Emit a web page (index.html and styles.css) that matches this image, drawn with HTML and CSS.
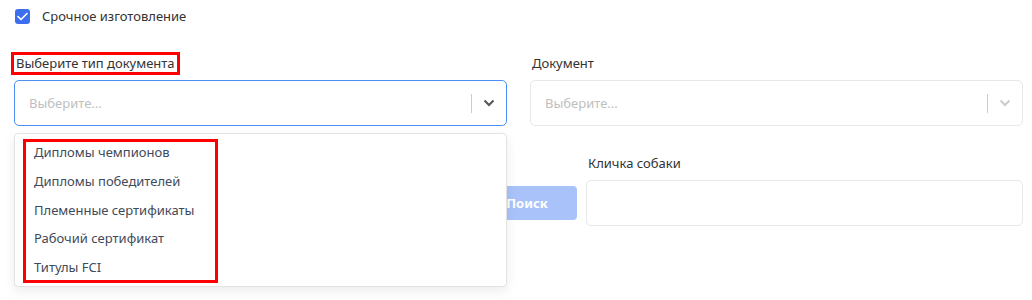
FILE: index.html
```html
<!DOCTYPE html>
<html>
<head>
	<meta charset="utf-8">
	<title>Поиск документов</title>
	<link rel="stylesheet" href="styles.css">
</head>
<body>
	<div class="page">
		<label class="check">
			<span class="check-box">
				<svg width="11" height="9" viewBox="0 0 11 9"><path d="M1 4.5 L4 7.5 L10 1.5" fill="none" stroke="#fff" stroke-width="1.6" stroke-linecap="round" stroke-linejoin="round"/></svg>
			</span>
			Срочное изготовление
		</label>

		<div class="row">
			<div class="field">
				<div class="label-line"><span class="label marked">Выберите тип документа</span></div>
				<div class="select focused">
					<span class="placeholder">Выберите...</span>
					<span class="sep"></span>
					<svg class="chev" width="12" height="8" viewBox="0 0 12 8"><path d="M1.5 1.5 L6 6 L10.5 1.5" fill="none" stroke="#555" stroke-width="2"/></svg>
				</div>
				<!-- открытое меню выбора -->
				<div class="menu">
					<div class="menu-list">
						<div class="option">Дипломы чемпионов</div>
						<div class="option">Дипломы победителей</div>
						<div class="option">Племенные сертификаты</div>
						<div class="option">Рабочий сертификат</div>
						<div class="option">Титулы FCI</div>
					</div>
				</div>
			</div>
			<div class="field">
				<div class="label-line"><span class="label">Документ</span></div>
				<div class="select">
					<span class="placeholder">Выберите...</span>
					<span class="sep"></span>
					<svg class="chev" width="12" height="8" viewBox="0 0 12 8"><path d="M1.5 1.5 L6 6 L10.5 1.5" fill="none" stroke="#ccc" stroke-width="2"/></svg>
				</div>
			</div>
		</div>

		<div class="row2">
			<div class="spacer"></div>
			<button class="search" type="button">Поиск</button>
			<div class="field name">
				<div class="label-line"><span class="label">Кличка собаки</span></div>
				<input class="input" type="text">
			</div>
		</div>
	</div>
</body>
</html>
```

FILE: styles.css
```css
html, body{
	min-height: 300px;
}
body{
	margin: 0;
	font-family: "Noto Sans", sans-serif;
	font-size: 13px;
	color: #333;
	background-color: #fff;
}
.page{
	padding: 7px 9px 0 14px;
}
.check{
	display: flex;
	align-items: center;
	gap: 12px;
	height: 18px;
	padding-left: 1px;
}
.check-box{
	width: 15px;
	height: 15px;
	border-radius: 3px;
	background-color: #3d6ef0;
	display: flex;
	align-items: center;
	justify-content: center;
}
.row{
	display: grid;
	grid-template-columns: 1fr 1fr;
	gap: 23px;
	margin-top: 29px;
}
.field{
	position: relative;
}
.label-line{
	height: 26px;
}
.label{
	display: inline-block;
	line-height: 17px;
	padding: 0 2px;
}
.marked{
	outline: 3px solid #f00;
}
.select{
	height: 44px;
	border: 1px solid #e6e8eb;
	border-radius: 5px;
	display: flex;
	align-items: center;
	padding: 0 11px 0 14px;
}
.focused{
	border-color: #4a90f5;
}
.placeholder{
	flex: 1;
	color: #c0c0c0;
}
.sep{
	width: 1px;
	height: 19px;
	background-color: #ccc;
	margin-right: 11px;
}
.menu{
	position: absolute;
	top: 79px;
	left: 0;
	right: 0;
	z-index: 2;
	background-color: #fff;
	border: 1px solid #e3e3e3;
	border-radius: 4px;
	box-shadow: 0 4px 12px rgba(0, 0, 0, 0.08);
	padding: 5px 0 3px 8px;
}
.menu-list{
	display: inline-block;
	border: 3px solid #f00;
	padding: 0 20px 0 0;
}
.option{
	height: 28.75px;
	line-height: 20px;
	padding-left: 8px;
	color: #3f4a5a;
}
.option:last-child{
	height: 23px;
}
.row2{
	display: flex;
	align-items: flex-end;
	margin-top: 28px;
}
.spacer{
	flex: 1;
}
.search{
	width: 100px;
	height: 34px;
	margin-bottom: 6px;
	border: none;
	border-radius: 4px;
	background-color: #a9c3fa;
	color: #fff;
	font-family: "Noto Sans", sans-serif;
	font-size: 13px;
	font-weight: bold;
}
.name{
	width: 437px;
	margin-left: 9px;
}
.input{
	display: block;
	box-sizing: border-box;
	width: 100%;
	height: 46px;
	border: 1px solid #e6e8eb;
	border-radius: 5px;
}
```
